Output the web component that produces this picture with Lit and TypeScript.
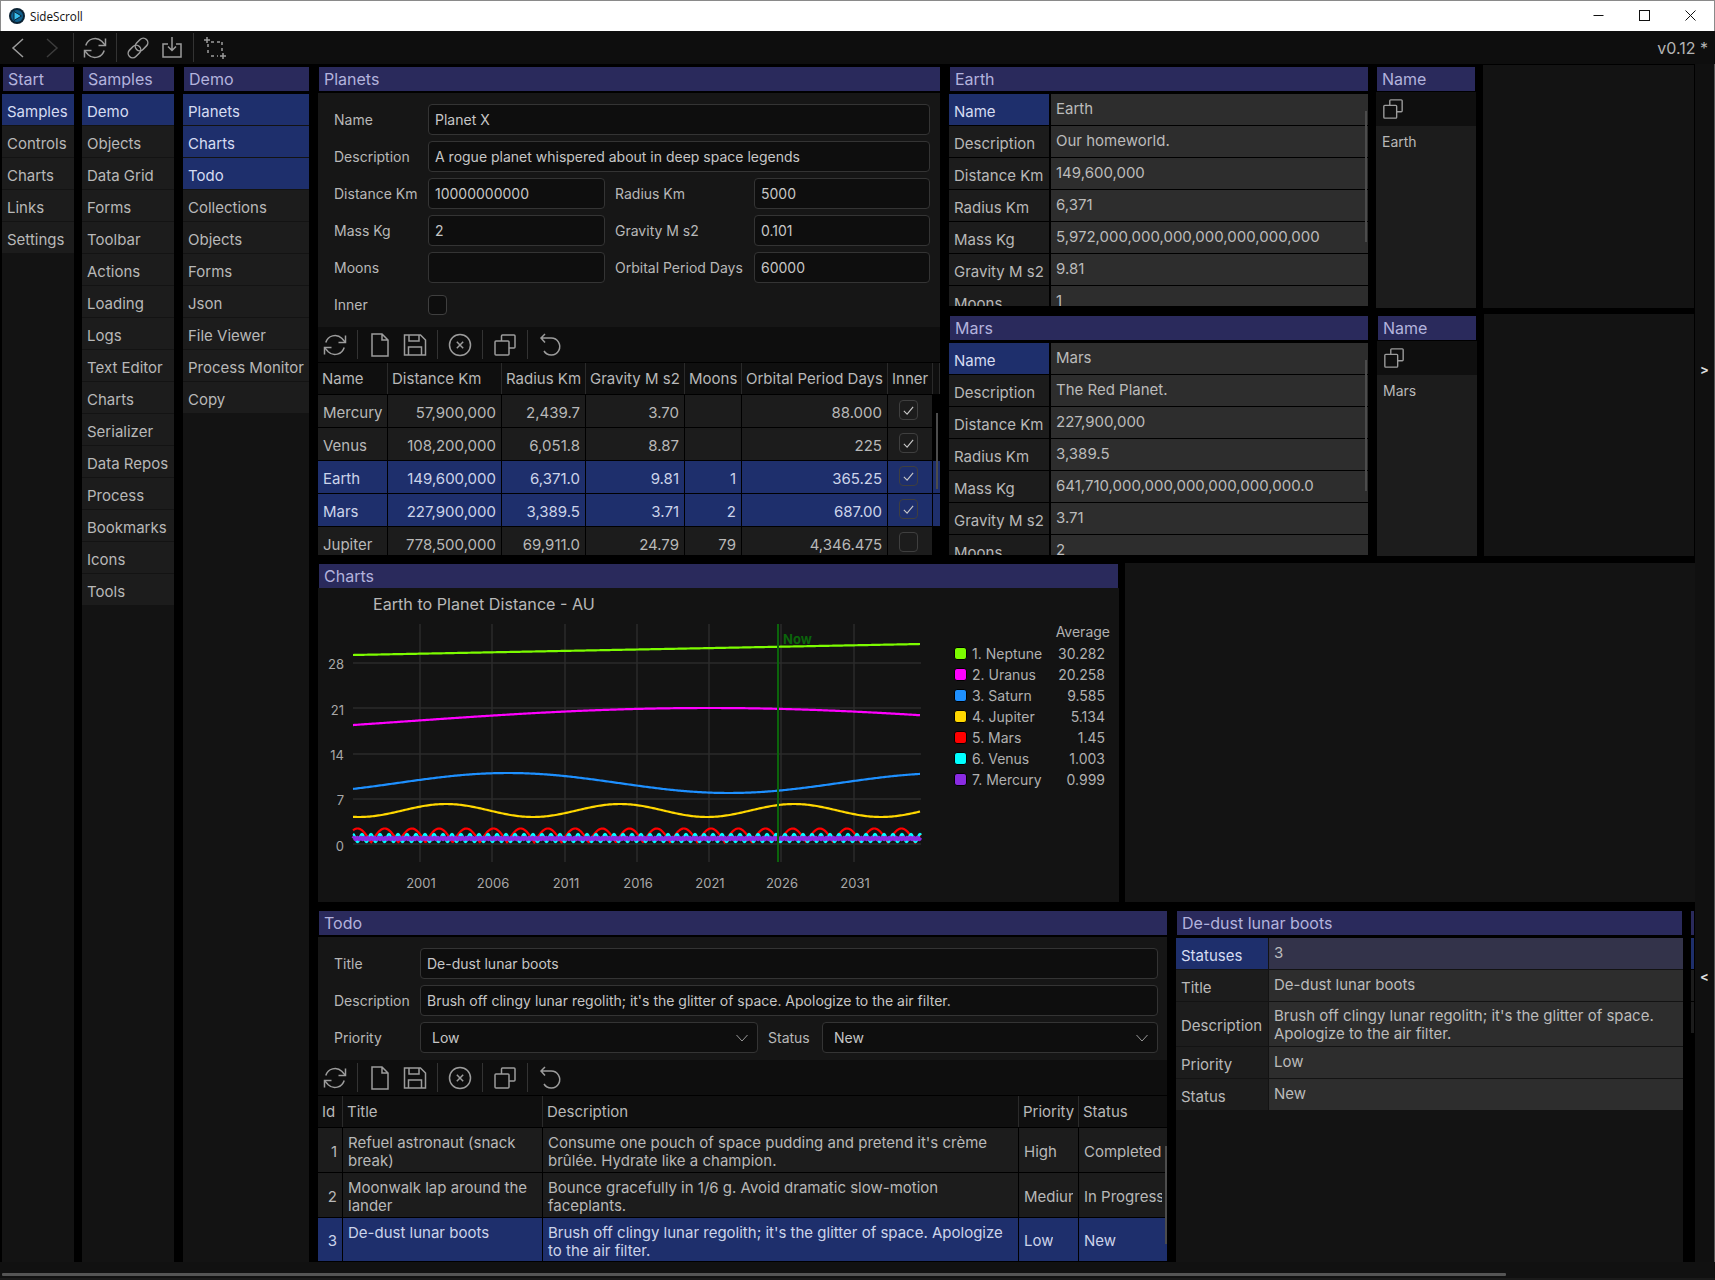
import { LitElement, html, css, svg } from "lit";
import { customElement } from "lit/decorators.js";

const I: Record<string, any> = {
  back: svg`<path d="M17 3 7 12l10 9"/>`,
  fwd: svg`<path d="M7 3l10 9-10 9"/>`,
  refresh: svg`<path d="M22.5 2.5v7h-7M1.5 21.5v-7h7"/><path d="M2.8 9.5A9.7 9.7 0 0 1 18.8 5.2L22.5 9.5M1.5 14.5l3.7 4.3a9.7 9.7 0 0 0 16-4.3"/>`,
  link: svg`<g transform="rotate(-45 12 12)"><rect x="0" y="7.5" width="14" height="9" rx="4.5"/><rect x="10" y="7.5" width="14" height="9" rx="4.5"/></g>`,
  import: svg`<path d="M8 8H3v13h18V8h-5"/><path d="M12 1v13M8 10.5l4 4 4-4"/>`,
  crop: svg`<path d="M5 8v3M5 14v3M19 6v3M19 12v3M8 6h3M14 6h3M8 20h3M14 20h1" /><path d="M4 1v6M1 4h6M20 17v6M17 20h6"/>`,
  file: svg`<path d="M4 1h10l6 6v16H4zM14 1v6h6"/>`,
  save: svg`<path d="M1.500 2h16l5 5v15h-21zM6 2v6h10V2M5.500 22v-8h13v8"/>`,
  cancel: svg`<circle cx="12" cy="12" r="10.500"/><path d="M8.800 8.800l6.400 6.400M15.200 8.800l-6.400 6.400"/>`,
  copy: svg`<path d="M8.500 8V3a1 1 0 0 1 1-1H21a1 1 0 0 1 1 1v11a1 1 0 0 1-1 1h-5"/><rect x="2" y="8" width="14" height="14" rx="1"/>`,
  undo: svg`<path d="M7 1 3 5l4 4.500M3 5h10a8.500 8.500 0 1 1-7 13"/>`,
};
const icon = (n: string, cls = "") =>
  html`<svg class="ic ${cls}" viewBox="0 0 24 24">${I[n]}</svg>`;

const sep = html`<i class="sep"></i>`;

const subTools = html`<div class="subtools">
  ${icon("refresh")}${sep}${icon("file")}${icon("save", "mt")}${sep}${icon("cancel")}${sep}${icon("copy")}${sep}${icon("undo")}
</div>`;

const menuCols = [
  { title: "Start", cls: "c1", sel: 1, items: ["Samples", "Controls", "Charts", "Links", "Settings"] },
  { title: "Samples", cls: "c2", sel: 1, items: ["Demo", "Objects", "Data Grid", "Forms", "Toolbar", "Actions", "Loading", "Logs", "Text Editor", "Charts", "Serializer", "Data Repos", "Process", "Bookmarks", "Icons", "Tools"] },
  { title: "Demo", cls: "c3", sel: 3, items: ["Planets", "Charts", "Todo", "Collections", "Objects", "Forms", "Json", "File Viewer", "Process Monitor", "Copy"] },
];

const planets = [
  ["Mercury", "57,900,000", "2,439.7", "3.70", "", "88.000", true, false],
  ["Venus", "108,200,000", "6,051.8", "8.87", "", "225", true, false],
  ["Earth", "149,600,000", "6,371.0", "9.81", "1", "365.25", true, true],
  ["Mars", "227,900,000", "3,389.5", "3.71", "2", "687.00", true, true],
  ["Jupiter", "778,500,000", "69,911.0", "24.79", "79", "4,346.475", false, false],
];

const todos = [
  ["1", "Refuel astronaut (snack break)", "Consume one pouch of space pudding and pretend it's crème brûlée. Hydrate like a champion.", "High", "Completed", false],
  ["2", "Moonwalk lap around the lander", "Bounce gracefully in 1/6 g. Avoid dramatic slow-motion faceplants.", "Medium", "In Progress", false],
  ["3", "De-dust lunar boots", "Brush off clingy lunar regolith; it's the glitter of space. Apologize to the air filter.", "Low", "New", true],
];

const earth: [string, string][] = [
  ["Name", "Earth"], ["Description", "Our homeworld."], ["Distance Km", "149,600,000"], ["Radius Km", "6,371"],
  ["Mass Kg", "5,972,000,000,000,000,000,000,000"], ["Gravity M s2", "9.81"], ["Moons", "1"],
];
const mars: [string, string][] = [
  ["Name", "Mars"], ["Description", "The Red Planet."], ["Distance Km", "227,900,000"], ["Radius Km", "3,389.5"],
  ["Mass Kg", "641,710,000,000,000,000,000,000.0"], ["Gravity M s2", "3.71"], ["Moons", "2"],
];

function curve(f: (x: number) => number, step = 1.5) {
  const p: string[] = [];
  for (let x = 353; x <= 921; x += step) p.push(x.toFixed(1) + "," + f(x).toFixed(2));
  return p.join(" ");
}
const TAU = Math.PI * 2;
const series = [
  { n: "1. Neptune", v: "30.282", c: "#7cfc00", s: 1.5, w: 2.2, f: (x: number) => 656 - ((x - 353) / 568) * 11 },
  { n: "2. Uranus", v: "20.258", c: "#ff00ff", s: 1.5, w: 2.2, f: (x: number) => 709 + 13.6 * (1 - Math.cos((TAU * (x - 709)) / 1225)) },
  { n: "3. Saturn", v: "9.585", c: "#1e90ff", s: 1.5, w: 2.2, f: (x: number) => 784 - 10 * Math.cos((TAU * (x - 508)) / 442) },
  { n: "4. Jupiter", v: "5.134", c: "#ffd700", s: 1.5, w: 2.2, f: (x: number) => 811.5 - 6.5 * Math.cos((TAU * (x - 446)) / 174) },
  { n: "5. Mars", v: "1.45", c: "#ff0000", s: 0.7, w: 2.2, f: (x: number) => 843.5 - 14 * Math.abs(Math.sin((Math.PI * (x - 343.9)) / 27.2)) },
  { n: "6. Venus", v: "1.003", c: "#00ffff", s: 0.5, w: 2.4, f: (x: number) => 839 - 4 * Math.cos((TAU * (x - 353)) / 9) },
  { n: "7. Mercury", v: "0.999", c: "#8a2be2", s: 0.35, w: 3.5, f: (x: number) => 839.5 - 1 * Math.sin((TAU * (x - 353)) / 3.5) },
];

const years = [[2001, 421], [2006, 493], [2011, 566], [2016, 638], [2021, 710], [2026, 782], [2031, 855]];
const gridX = [420, 492, 565, 637, 709, 781, 854];
const yTicks = [[28, 664, 669.5], [21, 709, 715.5], [14, 755, 760.5], [7, 800, 805.5], [0, 845, 851.5]];

function chart() {
  return html`<svg class="chart" viewBox="318 589 801 314" width="801" height="314">
    <text x="373" y="611" class="t16">Earth to Planet Distance - AU</text>
    ${yTicks.map(([l, y, ty]) => svg`<line x1="353" x2="921" y1=${y} y2=${y} class="gl"/><text x="344" y=${ty} class="t12" text-anchor="end">${l}</text>`)}
    ${gridX.map((x) => svg`<line x1=${x} x2=${x} y1="625" y2="863" class="gl"/>`)}
    ${years.map(([l, x]) => svg`<text x=${x} y="888.500" class="t12" text-anchor="middle">${l}</text>`)}
    ${series.map((s) => svg`<polyline points=${curve(s.f, s.s)} fill="none" stroke=${s.c} stroke-width=${s.w} stroke-linejoin="round"/>`)}
    <line x1="778" x2="778" y1="625" y2="863" stroke="#0b640b" stroke-width="2"/>
    <text x="783" y="645" class="now">Now</text>
    <text x="1110" y="638" class="t14" text-anchor="end">Average</text>
    ${series.map((s, i) => {
      const y = 648 + i * 21;
      return svg`<rect x="954.500" y=${y + 0.5} width="12" height="12" rx="2.500" fill=${s.c} stroke="#000"/>
        <text x="972" y=${y + 12} class="t14">${s.n}</text>
        <text x="1105" y=${y + 12} class="t14" text-anchor="end">${s.v}</text>`;
    })}
  </svg>`;
}

@customElement("app-root")
export class AppRoot extends LitElement {
  static styles = css`
    :host { display: block; width: 1715px; height: 1280px; background: #000; overflow: hidden;
      font-family: Inter, "Liberation Sans", sans-serif; font-size: 14px; color: #b8b8b8; }
    * { box-sizing: border-box; }
    .titlebar { height: 31px; background: #fff; border-top: 1px solid #8a8a8a; border-left: 1px solid #8a8a8a; border-right: 1px solid #8a8a8a;
      display: flex; align-items: center; padding: 0 0 1px 8px; color: #111; font: 11.700px "Open Sans", sans-serif; }
    .titlebar .logo { width: 16px; height: 16px; margin-right: 5px; }
    .winbtns { margin-left: auto; display: flex; gap: 35px; padding-right: 18px; align-items: center; }
    .winbtns svg { width: 11px; height: 11px; fill: none; stroke: #111; stroke-width: 1; }
    .toolbar { height: 33px; background: #0e0e0e; display: flex; align-items: center; gap: 9px; padding-left: 6px; padding-right: 7px; }
    .ver { margin-left: auto; font-size: 16px; color: #b4b4b4; }
    .ic { width: 24px; height: 24px; fill: none; stroke: #9c9c9c; stroke-width: 1.5; flex: none; }
    .ic.dim { stroke: #3c3c3c; }
    .ic.mt { margin-left: 1px; }
    .sep { width: 1px; height: 29px; background: #333; flex: none; }
    .main { height: 1198px; display: flex; background: #000; padding-left: 2px; }
    .col { display: flex; flex-direction: column; padding-top: 3px; flex: none; }
    .c1 { width: 72px; }
    .c2 { width: 92px; margin-left: 8px; }
    .c3 { width: 126px; margin-left: 9px; }
    .hd { height: 24px; background: #2a2a5c; color: #b3b3dd; font-size: 16px; display: flex; align-items: center; padding-left: 5px;
      margin-left: 1px; flex: none; white-space: nowrap; overflow: hidden; }
    .col .body { margin-top: 3px; flex: 1; background: #131313; display: flex; flex-direction: column; gap: 1px; padding-bottom: 1px; }
    .item { height: 31px; background: #1c1c1c; display: flex; align-items: center; padding: 4px 0 0 5px; font-size: 15px; flex: none; }
    .item.sel { background: #1e2f6c; color: #d5dcf2; }
    .content { width: 1377px; margin-left: 9px; flex: none; display: flex; flex-direction: column; padding-top: 1px; }
    .row1 { height: 492px; display: flex; flex: none; }
    .row2 { height: 339px; display: flex; flex: none; margin-top: 6px; }
    .row3 { height: 353px; display: flex; flex: none; margin-top: 7px; }
    .planets { width: 622px; padding-top: 2px; display: flex; flex-direction: column; flex: none; height: 490px; overflow: hidden; }
    .form { background: #161616; margin-top: 2px; display: grid; row-gap: 6px; align-items: center; padding: 11px 0 7px 16px; flex: none; }
    .form.p { grid-template-columns: 94px 177px 149px 176px; height: 234px; grid-auto-rows: 31px; }
    .form.t { grid-template-columns: 86px 338px 64px 336px; height: 123px; grid-auto-rows: 31px; }
    .lbl { white-space: nowrap; }
    .lbl.r { padding-left: 10px; }
    .inp { height: 31px; background: #0e0e0e; border: 1px solid #343434; border-radius: 4px; display: flex; align-items: center; padding-left: 6px; color: #c6c6c6; }
    .inp.sel { padding-left: 11px; padding-right: 8px; justify-content: space-between; }
    .inp.sel svg { width: 14px; height: 14px; fill: none; stroke: #999; stroke-width: 1; }
    .full { grid-column: 2 / -1; }
    .cb { width: 19px; height: 20px; border: 1px solid #3f3f3f; background: #0e0e0e; border-radius: 4px; display: flex; align-items: center; justify-content: center; }
    .cb svg { width: 13px; height: 13px; fill: none; stroke: #c8c8c8; stroke-width: 1.2; }
    .subtools { height: 35px; background: #0e0e0e; display: flex; align-items: center; gap: 10px; padding-left: 5px; flex: none; }
    .tbl { position: relative; margin-top: 1px; font-size: 15px; flex: 1; overflow: hidden; background: #000; min-height: 0; }
    .tr { display: grid; column-gap: 1px; margin-bottom: 1px; }
    .tr.p { grid-template-columns: 69px 113px 83px 98px 56px 145px 44px 6px; grid-auto-rows: 32px; }
    .tr.td { grid-template-columns: 24px 199px 475px 59px 88px; }
    .tr.th.p { grid-auto-rows: 31px; }
    .tr.td.th { grid-auto-rows: 31px; }
    .th { background: #2a2a2a; }
    .th > div { background: #0f0f0f; display: flex; align-items: center; padding-left: 4px; white-space: nowrap; overflow: hidden; }
    .cell { background: #1c1c1c; display: flex; align-items: center; padding: 2px 5px 0; white-space: nowrap; overflow: hidden; }
    .cell .tx { overflow: hidden; display: block; min-width: 0; }
    .cell.rt { justify-content: flex-end; }
    .cell.ct { justify-content: flex-start; padding: 0 0 2px 11px; }
    .cell.wrap { white-space: normal; align-items: flex-start; padding-top: 6px; line-height: 18px; }
    .sl .cell { background: #1e2f6c; color: #ccd4ea; }
    .sb { position: absolute; width: 2px; background: #4c4c4c; }
    .bar-p { left: 618px; top: 50px; height: 76px; }
    .bar-t { left: 847px; top: 50px; height: 98px; }
    .bar-d { left: 416px; top: 17px; height: 131px; }
    .detail { width: 745px; margin-left: 9px; display: flex; flex-direction: column; flex: none; }
    .sect { height: 243px; display: flex; flex: none; }
    .sect + .sect { height: 242px; margin-top: 6px; }
    .dleft { width: 419px; flex: none; padding-top: 2px; display: flex; flex-direction: column; height: 241px; overflow: hidden; }
    .dleft .hd { width: 418px; }
    .dt { position: relative; margin-top: 3px; flex: 1; overflow: hidden; min-height: 0; font-size: 15px; }
    .dr { display: grid; grid-template-columns: 100px 317px; column-gap: 2px; margin-bottom: 1px; }
    .dr.w { grid-template-columns: 92px 414px; column-gap: 1px; }
    .dk { height: 100%; min-height: 31px; background: #1c1c1c; display: flex; align-items: center; padding: 3px 0 0 5px; white-space: nowrap; }
    .dk.on { background: #1e2f6c; color: #d5dcf2; }
    .dv { min-height: 31px; background: #2d2d2d; display: flex; align-items: center; padding: 0 5px 1px; line-height: 18px; color: #bbb; }
    .dv.on { background: #33334a; }
    .dv.two { padding: 5px 5px 3px; }
    .links { width: 100px; margin-left: 8px; flex: none; padding-top: 2px; display: flex; flex-direction: column; font-size: 14px; }
    .links.m { margin-left: 9px; }
    .links .hd { width: 98px; }
    .lk1 { height: 34px; background: #0f0f0f; margin-top: 1px; display: flex; align-items: center; padding-left: 6px; flex: none; }
    .lk1 .ic { width: 22px; height: 22px; }
    .lk2 { flex: 1; background: #1c1c1c; padding: 7px 0 0 6px; }
    .empty { background: #131313; flex: none; }
    .e1 { width: 211px; margin-left: 7px; }
    .e2 { width: 210px; margin-left: 7px; }
    .chartwrap { width: 801px; flex: none; padding-top: 1px; display: flex; flex-direction: column; }
    .chartwrap .hd { width: 799px; }
    .chart { display: block; background: #131313; flex: none; }
    .chart .gl { stroke: #2b2b2b; stroke-width: 1.5; }
    .chart text { font-family: Inter, sans-serif; fill: #a8a8a8; }
    .chart .t12 { font-size: 13px; }
    .chart .t14 { font-size: 14px; fill: #b0b0b0; }
    .chart .t16 { font-size: 16.150px; fill: #b8b8b8; }
    .chart .now { font-size: 13px; font-weight: 700; fill: #0b640b; }
    .e3 { width: 570px; margin-left: 6px; height: 339px; }
    .todo { width: 849px; padding-top: 2px; display: flex; flex-direction: column; flex: none; }
    .tr.h44 { grid-auto-rows: 44px; }
    .tr.h43 { grid-auto-rows: 43px; }
    .dd { width: 507px; margin-left: 9px; flex: none; padding-top: 2px; display: flex; flex-direction: column; }
    .dd .hd { width: 505px; }
    .ddbody { flex: 1; background: #131313; margin-top: 3px; font-size: 15px; padding-bottom: 1px; }
    .sliver { width: 3px; margin-left: 8px; flex: none; padding-top: 2px; display: flex; flex-direction: column; overflow: hidden; }
    .sliver i { display: block; flex: none; }
    .side { width: 20px; flex: none; background: #101010; display: flex; flex-direction: column; align-items: center; font-size: 13px; font-weight: 700; color: #ddd; line-height: 14px; border-right: 1px solid #555; }
    .side .a { margin-top: 298px; }
    .side .b { margin-top: 593px; }
    .foot { height: 18px; background: #111; position: relative; }
    .foot i { position: absolute; left: 2px; top: 11px; width: 1504px; height: 3px; background: #555; border-radius: 1px; }
    .foot::after { content: ""; position: absolute; left: 0; right: 0; top: 16px; height: 2px; background: #1a1a1a; }
  `;

  private detail(rows: [string, string][]) {
    return html`<div class="dt">
      ${rows.map(([k, v], i) => html`<div class="dr"><div class="dk ${i === 0 ? "on" : ""}">${k}</div><div class="dv">${v}</div></div>`)}
      <div class="sb bar-d"></div>
    </div>`;
  }

  private section(title: string, rows: [string, string][], link: string, e: string, m: string) {
    return html`<div class="sect">
      <div class="dleft"><div class="hd">${title}</div>${this.detail(rows)}</div>
      <div class="links ${m}"><div class="hd">Name</div><div class="lk1">${icon("copy")}</div><div class="lk2">${link}</div></div>
      <div class="empty ${e}"></div>
    </div>`;
  }

  render() {
    const check = html`<svg viewBox="0 0 14 14"><path d="M2 7.500 5.500 11 12 3"/></svg>`;
    const chev = html`<svg viewBox="0 0 14 14"><path d="M1.500 4 7 10l5.500-6"/></svg>`;
    return html`
      <div class="titlebar">
        <svg class="logo" viewBox="0 0 16 16"><circle cx="8" cy="8" r="8" fill="#0b2233"/><circle cx="8" cy="8" r="6" fill="#0f5f8c"/><path d="M5 3.500 12.500 8 5 12.500z" fill="#39c0ee" stroke="#0b2233"/></svg>
        SideScroll
        <div class="winbtns">
          <svg viewBox="0 0 11 11"><path d="M0.500 5.500h10"/></svg>
          <svg viewBox="0 0 11 11"><rect x="0.500" y="0.500" width="10" height="10"/></svg>
          <svg viewBox="0 0 11 11"><path d="M0.500 0.500l10 10M10.500 0.500l-10 10"/></svg>
        </div>
      </div>
      <div class="toolbar">
        ${icon("back")}${icon("fwd", "dim mt")}${sep}${icon("refresh")}${sep}${icon("link")}${icon("import", "mt")}${sep}${icon("crop")}
        <span class="ver">v0.12 *</span>
      </div>
      <div class="main">
        ${menuCols.map((c) => html`<div class="col ${c.cls}">
          <div class="hd">${c.title}</div>
          <div class="body">${c.items.map((t, i) => html`<div class="item ${i < c.sel ? "sel" : ""}">${t}</div>`)}</div>
        </div>`)}
        <div class="content">
          <div class="row1">
            <div class="planets">
              <div class="hd">Planets</div>
              <div class="form p">
                <div class="lbl">Name</div><div class="inp full">Planet X</div>
                <div class="lbl">Description</div><div class="inp full">A rogue planet whispered about in deep space legends</div>
                <div class="lbl">Distance Km</div><div class="inp">10000000000</div><div class="lbl r">Radius Km</div><div class="inp">5000</div>
                <div class="lbl">Mass Kg</div><div class="inp">2</div><div class="lbl r">Gravity M s2</div><div class="inp">0.101</div>
                <div class="lbl">Moons</div><div class="inp"></div><div class="lbl r">Orbital Period Days</div><div class="inp">60000</div>
                <div class="lbl">Inner</div><div class="cb"></div>
              </div>
              ${subTools}
              <div class="tbl">
                <div class="tr p th">
                  ${["Name", "Distance Km", "Radius Km", "Gravity M s2", "Moons", "Orbital Period Days", "Inner", ""].map((h) => html`<div>${h}</div>`)}
                </div>
                ${planets.map((p) => html`<div class="tr p ${p[7] ? "sl" : ""}">
                  <div class="cell">${p[0]}</div>
                  ${[1, 2, 3, 4, 5].map((i) => html`<div class="cell rt">${p[i]}</div>`)}
                  <div class="cell ct"><div class="cb" style=${p[7] ? "background:#1e2f6c" : "background:#1c1c1c"}>${p[6] ? check : ""}</div></div>
                  <div class="cell" style=${p[7] ? "" : "background:#000"}></div>
                </div>`)}
                <div class="sb bar-p"></div>
              </div>
            </div>
            <div class="detail">
              ${this.section("Earth", earth, "Earth", "e1", "")}
              ${this.section("Mars", mars, "Mars", "e2", "m")}
            </div>
          </div>
          <div class="row2">
            <div class="chartwrap"><div class="hd">Charts</div>${chart()}</div>
            <div class="empty e3"></div>
          </div>
          <div class="row3">
            <div class="todo">
              <div class="hd">Todo</div>
              <div class="form t">
                <div class="lbl">Title</div><div class="inp full">De-dust lunar boots</div>
                <div class="lbl">Description</div><div class="inp full">Brush off clingy lunar regolith; it's the glitter of space. Apologize to the air filter.</div>
                <div class="lbl">Priority</div><div class="inp sel">Low ${chev}</div>
                <div class="lbl r">Status</div><div class="inp sel">New ${chev}</div>
              </div>
              ${subTools}
              <div class="tbl">
                <div class="tr td th">${["Id", "Title", "Description", "Priority", "Status"].map((h) => html`<div>${h}</div>`)}</div>
                ${todos.map((t, i) => html`<div class="tr td ${i < 2 ? "h44" : "h43"} ${t[5] ? "sl" : ""}">
                  <div class="cell rt">${t[0]}</div>
                  <div class="cell wrap">${t[1]}</div>
                  <div class="cell wrap">${t[2]}</div>
                  <div class="cell"><span class="tx">${t[3]}</span></div>
                  <div class="cell"><span class="tx">${t[4]}</span></div>
                </div>`)}
                <div class="sb bar-t"></div>
              </div>
            </div>
            <div class="dd">
              <div class="hd">De-dust lunar boots</div>
              <div class="ddbody">
                <div class="dr w"><div class="dk on">Statuses</div><div class="dv on">3</div></div>
                <div class="dr w"><div class="dk">Title</div><div class="dv">De-dust lunar boots</div></div>
                <div class="dr w"><div class="dk">Description</div><div class="dv two">Brush off clingy lunar regolith; it's the glitter of space. Apologize to the air filter.</div></div>
                <div class="dr w"><div class="dk">Priority</div><div class="dv">Low</div></div>
                <div class="dr w"><div class="dk">Status</div><div class="dv">New</div></div>
              </div>
            </div>
            <div class="sliver">
              <i style="height:24px;background:#2a2a5c"></i>
              <i style="height:3px"></i>
              <i style="height:31px;background:#1e2f6c"></i>
              <i style="height:1px"></i>
              <i style="height:31px;background:#1c1c1c"></i>
              <i style="height:1px"></i>
              <i style="height:31px;background:#1c1c1c"></i>
            </div>
          </div>
        </div>
        <div class="side"><span class="a">&gt;</span><span class="b">&lt;</span></div>
      </div>
      <div class="foot"><i></i></div>
    `;
  }
}
